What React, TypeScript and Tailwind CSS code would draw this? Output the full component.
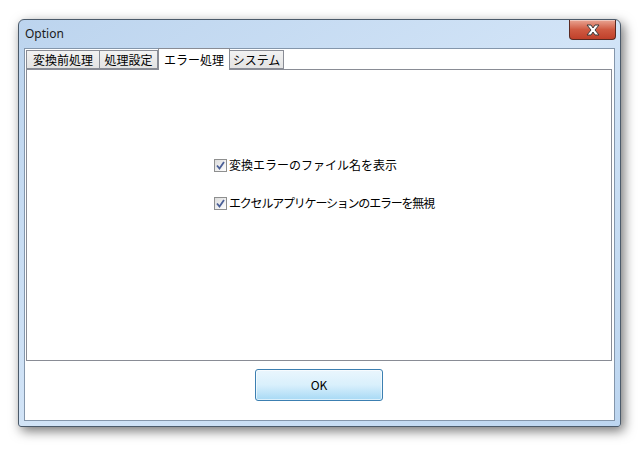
import React from "react";

const jp = { fontFamily: '"Noto Sans CJK JP", "Noto Sans", sans-serif' };

function CloseButton() {
  return (
    <div className="w-[47px] h-[20px] rounded-b-[4px] border border-t-0 border-[#5a2a22] bg-gradient-to-b from-[#e8a493] via-[#cf5a42] to-[#c0402a] flex items-center justify-center shadow-[inset_0_1px_0_rgba(255,255,255,0.4)]">
      <svg width="16" height="12" viewBox="0 0 16 12">
        <path
          d="M2 1 L6 1 L8 4 L10 1 L14 1 L10 6 L14 11 L10 11 L8 8 L6 11 L2 11 L6 6 Z"
          fill="#ffffff"
          stroke="#3b3b3b"
          strokeWidth="1"
          strokeLinejoin="round"
        />
      </svg>
    </div>
  );
}

function Checkbox({ label, tight }: { label: string; tight?: boolean }) {
  return (
    <div className="flex items-center h-[16px]">
      <div className="w-[13px] h-[13px] border border-[#8e8f8f] bg-gradient-to-br from-[#dcdcdc] to-[#ffffff] flex items-center justify-center">
        <svg width="9" height="9" viewBox="0 0 9 9">
          <path d="M1 4.5 L3.5 7.5 L8 1" fill="none" stroke="#4a5f97" strokeWidth="1.8" />
        </svg>
      </div>
      <span
        className={
          tight
            ? "ml-[2px] text-[12px] text-black leading-[16px] tracking-[-1.2px]"
            : "ml-[2px] text-[12px] text-black leading-[16px]"
        }
        style={jp}
      >
        {label}
      </span>
    </div>
  );
}

function Tab({ label, w, active }: { label: string; w: number; active?: boolean }) {
  if (active) {
    return (
      <div
        className="relative z-10 h-[22px] -mb-px border border-b-0 border-[#898c95] bg-white flex items-start justify-center pt-[2px] text-[12px] text-black"
        style={{ ...jp, width: w }}
      >
        {label}
      </div>
    );
  }
  return (
    <div
      className="h-[19px] border border-[#898c95] bg-gradient-to-b from-[#f2f2f2] to-[#e3e3e3] flex items-center justify-center text-[12px] text-black -ml-px first:ml-0"
      style={{ ...jp, width: w }}
    >
      {label}
    </div>
  );
}

export default function App() {
  return (
    <div className="w-[644px] h-[451px] bg-white pt-[19px] pl-[18px]">
      <div className="w-[603px] h-[408px] rounded-t-[6px] rounded-b-[3px] border border-[#4b5a6a] bg-gradient-to-br from-[#bcd4ee] via-[#d2e4f7] to-[#bdd6f0] shadow-[3px_4px_12px_rgba(0,0,0,0.55)] flex flex-col px-[5px] pb-[5px]">
        <div className="h-[28px] flex items-start justify-between">
          <span
            className="mt-[5px] ml-[1px] text-[12px] text-[#1a1a1a]"
            style={{ fontFamily: '"Noto Sans", "Liberation Sans", sans-serif' }}
          >
            Option
          </span>
          <div className="-mr-[1px]">
            <CloseButton />
          </div>
        </div>
        <div className="flex-1 border border-[#8496ab] bg-white flex flex-col pl-[1px] pr-[2px]">
          <div className="flex items-end h-[20px]">
            <Tab label="変換前処理" w={74} />
            <Tab label="処理設定" w={59} />
            <Tab label="エラー処理" w={72} active />
            <Tab label="システム" w={55} />
          </div>
          <div className="h-[292px] border border-[#898c95] bg-white flex flex-col pl-[187px] pt-[87px] gap-[22px]">
            <Checkbox label="変換エラーのファイル名を表示" />
            <Checkbox label="エクセルアプリケーションのエラーを無視" tight />
          </div>
          <div className="flex-1 flex justify-center pt-[8px]">
            <button
              className="w-[128px] h-[32px] rounded-[3px] border border-[#3c7fb1] bg-gradient-to-b from-[#eaf6fd] via-[#d9f0fc] to-[#a7d9f5] shadow-[inset_0_0_0_1px_rgba(255,255,255,0.6)] text-[12px] text-black"
              style={jp}
            >
              OK
            </button>
          </div>
        </div>
      </div>
    </div>
  );
}
